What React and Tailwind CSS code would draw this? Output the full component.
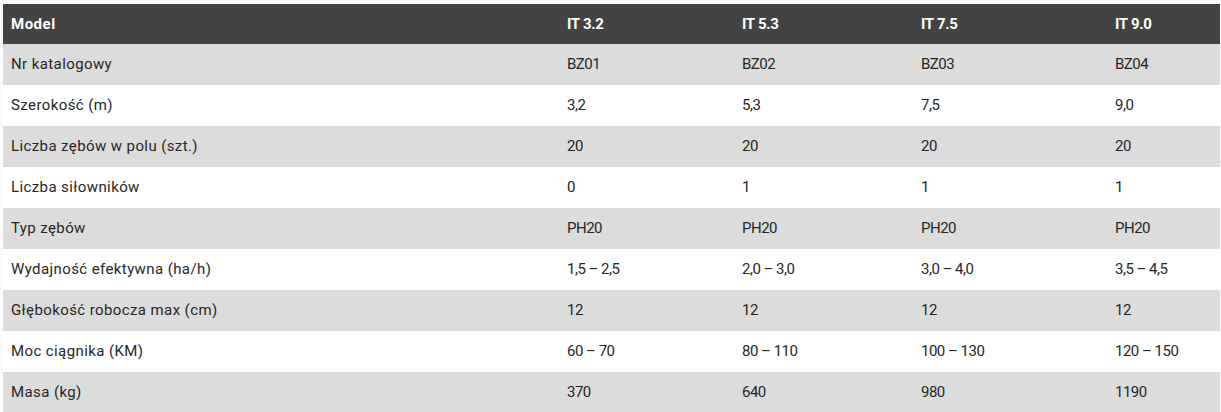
import React from "react";

const header = ["Model", "IT 3.2", "IT 5.3", "IT 7.5", "IT 9.0"];
const rows = [
  ["Nr katalogowy", "BZ01", "BZ02", "BZ03", "BZ04"],
  ["Szerokość (m)", "3,2", "5,3", "7,5", "9,0"],
  ["Liczba zębów w polu (szt.)", "20", "20", "20", "20"],
  ["Liczba siłowników", "0", "1", "1", "1"],
  ["Typ zębów", "PH20", "PH20", "PH20", "PH20"],
  ["Wydajność efektywna (ha/h)", "1,5 – 2,5", "2,0 – 3,0", "3,0 – 4,0", "3,5 – 4,5"],
  ["Głębokość robocza max (cm)", "12", "12", "12", "12"],
  ["Moc ciągnika (KM)", "60 – 70", "80 – 110", "100 – 130", "120 – 150"],
  ["Masa (kg)", "370", "640", "980", "1190"],
];

export default function App() {
  return (
    <div className="min-h-[412px] bg-[#fafafa] pt-[4px] pl-[3px] pr-[1px]" style={{ fontFamily: "Roboto, 'Noto Sans', sans-serif" }}>
      <table className="w-[1217px] table-fixed border-collapse text-[15px] text-[#262626]">
        <colgroup>
          <col className="w-[556px]" />
          <col className="w-[175px]" />
          <col className="w-[179px]" />
          <col className="w-[194px]" />
          <col className="w-[113px]" />
        </colgroup>
        <thead>
          <tr className="h-[40px] bg-[#434343] text-white">
            {header.map((h, i) => (
              <th
                key={i}
                className={i === 0 ? "px-[8px] text-left font-bold tracking-[0.5px]" : "px-[8px] text-left font-bold tracking-[-0.3px]"}
              >
                {h}
              </th>
            ))}
          </tr>
        </thead>
        <tbody>
          {rows.map((r, ri) => (
            <tr key={ri} className={ri % 2 === 0 ? "h-[41px] bg-[#dcdcdc]" : "h-[41px] bg-white"}>
              {r.map((c, ci) => (
                <td
                  key={ci}
                  className={
                    ci === 0
                      ? "px-[8px] text-left whitespace-nowrap font-normal tracking-[0.4px]"
                      : "px-[8px] text-left whitespace-nowrap font-normal tracking-[-0.5px]"
                  }
                >
                  {c}
                </td>
              ))}
            </tr>
          ))}
        </tbody>
      </table>
    </div>
  );
}
